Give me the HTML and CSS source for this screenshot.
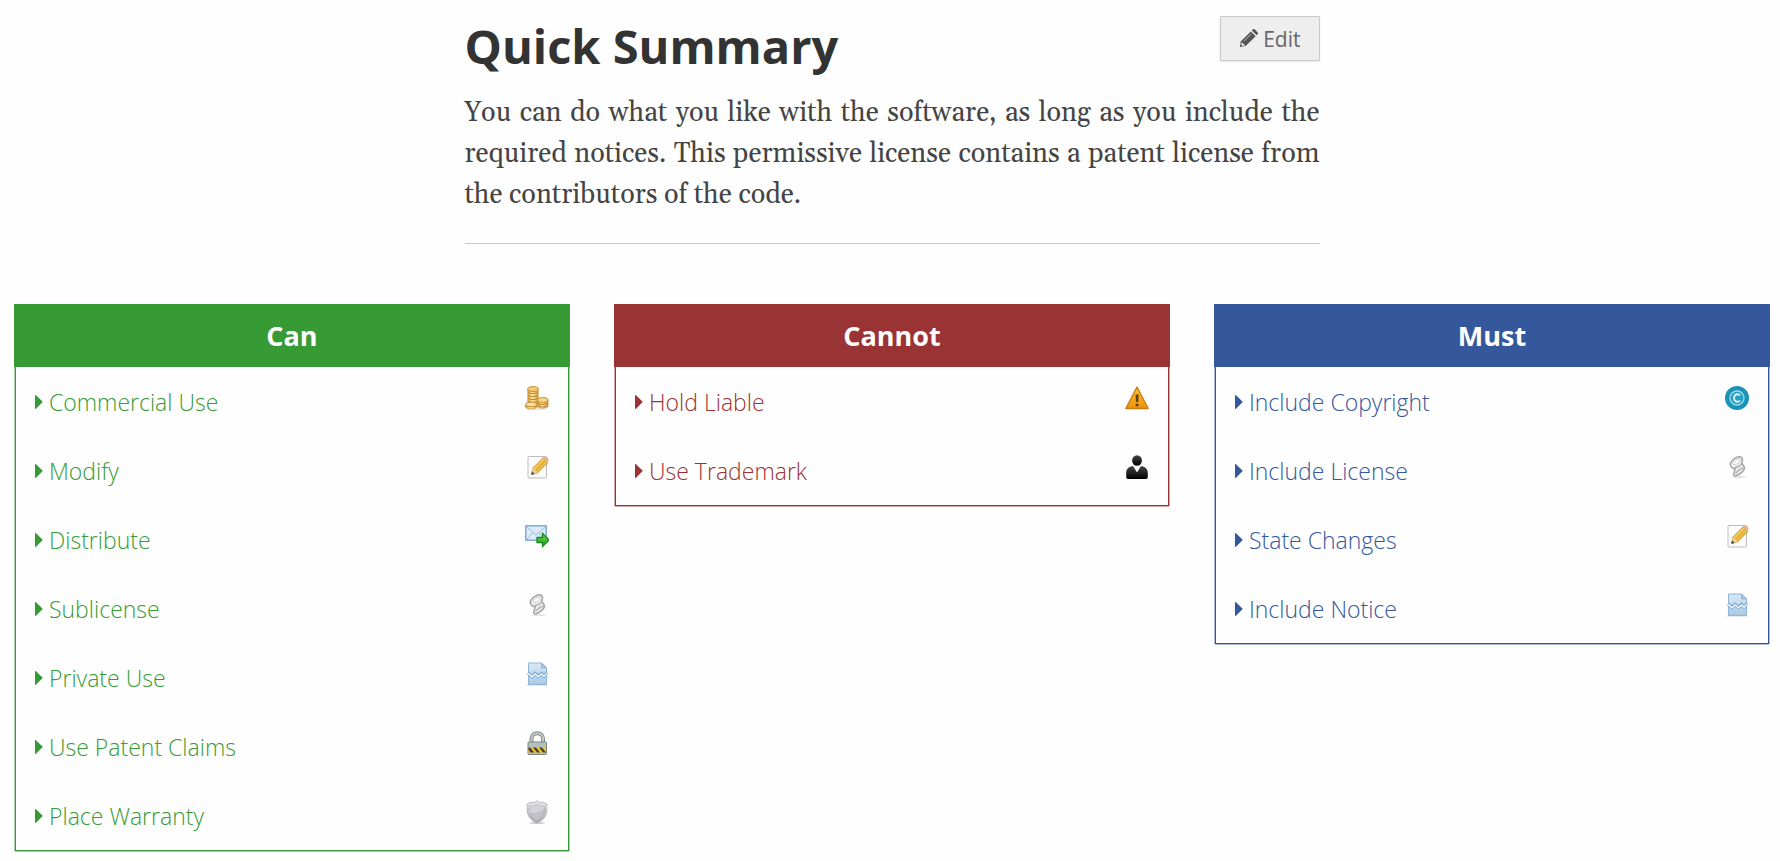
FILE: index.html
```html
<!DOCTYPE html>
<html lang="en">
<head>
<meta charset="utf-8">
<meta name="viewport" content="width=device-width, initial-scale=1">
<title>Quick Summary</title>
<link rel="stylesheet" href="styles.css">
</head>
<body>
<svg class="defs" aria-hidden="true">
  <defs>
    <linearGradient id="gold" x1="0" x2="1" y1="0" y2="0"><stop offset="0" stop-color="#d39a3a"/><stop offset=".45" stop-color="#fae7a4"/><stop offset="1" stop-color="#d09638"/></linearGradient>
    <linearGradient id="pencil" x1="0" x2="1" y1="0" y2="1"><stop offset="0" stop-color="#ffe680"/><stop offset="1" stop-color="#dd9d1c"/></linearGradient>
    <linearGradient id="blue" x1="0" x2="0" y1="0" y2="1"><stop offset="0" stop-color="#d9e9f7"/><stop offset="1" stop-color="#a9c9e4"/></linearGradient>
    <linearGradient id="green" x1="0" x2="0" y1="0" y2="1"><stop offset="0" stop-color="#6fdc4a"/><stop offset="1" stop-color="#1f9d22"/></linearGradient>
    <linearGradient id="amber" x1="0" x2="0" y1="0" y2="1"><stop offset="0" stop-color="#ffc933"/><stop offset="1" stop-color="#ef8f0c"/></linearGradient>
    <linearGradient id="black" x1="0" x2="0" y1="0" y2="1"><stop offset="0" stop-color="#444"/><stop offset="1" stop-color="#000"/></linearGradient>
    <linearGradient id="steel" x1="0" x2="0" y1="0" y2="1"><stop offset="0" stop-color="#ebebed"/><stop offset="1" stop-color="#a9a9b4"/></linearGradient>
    <symbol id="i-caret" viewBox="0 0 8 14"><path d="M0 .6C0 0 .6-.1 1 .3l6.2 6c.5.4.5.9 0 1.3L1 13.7c-.4.4-1 .2-1-.3z" fill="currentColor"/></symbol>
    <symbol id="i-edit" viewBox="0 0 20 20"><path d="M1 19l1-6L12.500 2.500l5 5L7 18z" fill="#555"/><path d="M13.500 1.500l1-1c.7-.7 1.500-.7 2.200 0l2.800 2.800c.7.700.7 1.500 0 2.200l-1 1z" fill="#555"/><path d="M5 13L13 5" stroke="#bbb" stroke-width="1"/><path d="M2.800 14.200l1.200.3.500 1.500 1.400.400.3 1.200-2.200.400-1.500-1.500z" fill="#eee"/></symbol>
    <symbol id="i-coins" viewBox="0 0 24 24">
      <ellipse cx="12" cy="23" rx="11" ry="1" fill="#ddd" opacity=".7"/>
      <path d="M2.500 2.800v16h11v-16z" fill="url(#gold)"/>
      <path d="M2.500 6c2 2 9 2 11 0M2.500 9c2 2 9 2 11 0M2.500 12c2 2 9 2 11 0M2.500 15c2 2 9 2 11 0" fill="none" stroke="#bd842c" stroke-width="1"/>
      <ellipse cx="8" cy="3" rx="5.500" ry="2.400" fill="#f3cd73" stroke="#c98f33"/>
      <path d="M12.500 14v6.500c2 2.200 8 2.200 10.500 0V14z" fill="url(#gold)" stroke="#c98f33" stroke-width=".7"/>
      <path d="M12.500 17c2 2 8 2 10.500 0M12.500 19.500c2 2 8 2 10.500 0" fill="none" stroke="#bd842c"/>
      <ellipse cx="17.800" cy="14" rx="5.200" ry="2.400" fill="#f5d689" stroke="#c98f33"/>
      <path d="M.5 18.500v2.700c2 2.400 9 2.400 11.500 0v-2.700z" fill="url(#gold)" stroke="#c98f33" stroke-width=".7"/>
      <ellipse cx="6.200" cy="18.400" rx="5.700" ry="2.300" fill="#f7dfa0" stroke="#c98f33"/>
    </symbol>
    <symbol id="i-note" viewBox="0 0 24 24">
      <rect x="3" y="1.500" width="18.500" height="21.500" rx="1" fill="#fcfcfc" stroke="#bcbcbc"/>
      <path d="M6.500 19.500l1.500-6.500L18 2.700l5 4.600L12.500 18z" fill="url(#pencil)" stroke="#b98a2a" stroke-width=".8"/>
      <path d="M10.500 15.500L20.500 5.200" stroke="#d9a021" stroke-width="1"/>
      <path d="M17.700 3l1.500-1.300c1.800-.8 5.200 2 4.200 4.300L22.500 7.500z" fill="#dfb294"/>
      <path d="M6.500 19.500l1.500-6.500 4.500 5z" fill="#efd3a4"/><path d="M6.300 19.800l.8-3.500 2.500 2.600z" fill="#444"/>
    </symbol>
    <symbol id="i-mail" viewBox="0 0 24 24">
      <rect x=".8" y="1.800" width="20.400" height="14.400" fill="#dcebfa" stroke="#6f9fd2" stroke-width="1.300"/>
      <path d="M1.500 2.500l9.500 8.500 9.500-8.500M1.500 15.500l6.700-7M20 15.500l-6.700-7" fill="none" stroke="#9bbcde"/>
      <path d="M12 13.500h5.500V9.300L24 16l-6.500 6.500v-4H12z" fill="url(#green)" stroke="#188a1c" stroke-width="1.300"/>
    </symbol>
    <symbol id="i-scroll" viewBox="0 0 24 24">
      <ellipse cx="14" cy="22" rx="7" ry="1" fill="#e4e4e4"/>
      <path d="M5.300 8.200C6.500 5 12 1.300 15 1.800c3 .7 3 3.700 1.700 6.200l2.800 4.500c.6 2.800-4.500 6.800-8.300 8.300-2.500.6-3.200-1.500-2-3.500l1-3.300c-3-.3-5.500-3-4.900-5.800z" fill="#eee" stroke="#a4a4a4" stroke-width="1.500"/>
      <path d="M7.500 8.500c1-2 5-4.700 7.500-4.700 1 1.500-.5 4-2 4.700-2 1-4.500 1.500-5.500 0z" fill="#fbfbfb" stroke="#c4c4c4" stroke-width=".8"/>
      <path d="M9.500 12.500c2.500 0 5.500-1.500 7.500-4M10.500 18.500c2-2.500 5.500-5 8.500-5.500" fill="none" stroke="#b0b0b0" stroke-width="1.300"/>
    </symbol>
    <symbol id="i-page" viewBox="0 0 24 24">
      <path d="M2 23h20" stroke="#d0d4d8"/>
      <path d="M3.500 1h13l5 5v16.500h-18z" fill="url(#blue)" stroke="#8fb5d6" stroke-width="1"/>
      <path d="M16.500 1v5h5z" fill="#a6c6e1" stroke="#86aed2" stroke-width=".8"/>
      <path d="M3 11l4 3.500 3-3 3.500 3 3-3 2.500 2.500 3-3.500" fill="none" stroke="#7ba7cf" stroke-width="3.200"/>
      <path d="M3 11.300l4 3.500 3-3 3.500 3 3-3 2.500 2.500 3-3.500" fill="none" stroke="#f8fbff" stroke-width="1.300"/>
    </symbol>
    <symbol id="i-lock" viewBox="0 0 24 24">
      <path d="M6.500 12V7.500c0-7 11.500-7 11.500 0V12" fill="none" stroke="#858d88" stroke-width="4"/>
      <path d="M6.500 12V7.500c0-7 11.500-7 11.500 0V12" fill="none" stroke="#c3cac6" stroke-width="2"/>
      <rect x="3" y="11" width="18.500" height="12.500" rx="1" fill="#b4c0bb" stroke="#7b8581"/>
      <path d="M3.500 16.500H21v5H3.500z" fill="#efc22c"/>
      <path d="M3.500 16.500h1.700l4 5H5.500l-2-2.700zM8 16.500h3l4 5h-3zM14 16.500h3l4 5h-3z" fill="#46432c"/>
    </symbol>
    <symbol id="i-shield" viewBox="0 0 24 24">
      <ellipse cx="12" cy="23" rx="8" ry="1" fill="#ccc"/>
      <path d="M12 .8c2 1.800 4 2.400 6 1.200l4.500 2.500c-1.200 1.500-1 2.700-.7 4.700C22.200 16.500 17 21 12 23 7 21 1.800 16.500 2.200 9.200c.3-2 .5-3.200-.7-4.700L6 2c2 1.200 4 .6 6-1.200z" fill="url(#steel)" stroke="#aaa" stroke-width=".8"/>
      <path d="M12 4.500c2.500 1.700 5 2 7.500 1.500C20.500 14 17 18.500 12 20.500 7 18.500 3.500 14 4.500 6c2.500.5 5 .2 7.500-1.500z" fill="#c0c0c9" stroke="#a8a8b0" stroke-width=".7"/>
      <path d="M5 12.500C10 14 17 11.500 19.300 7.500V6.200C17 6.500 14.500 6.200 12 4.800 9.500 6.200 7 6.500 4.700 6.200z" fill="#d3d3d9"/>
    </symbol>
    <symbol id="i-warning" viewBox="0 0 24 24">
      <path d="M12 1.200L23.200 22.500H.8z" fill="url(#amber)" stroke="#cd7d10" stroke-width="1.400" stroke-linejoin="round"/>
      <path d="M10.500 8.500h3.200l-.5 7.500h-2.200zM10.700 17.700h2.800v2.500h-2.800z" fill="#5a4013"/>
    </symbol>
    <symbol id="i-person" viewBox="0 0 24 24">
      <ellipse cx="12" cy="5.500" rx="4.900" ry="5.200" fill="url(#black)"/>
      <path d="M1.200 22v-4c0-4.500 3-6.800 7-6.800l3.800 6.300 3.800-6.300c4 0 7 2.300 7 6.800v4c0 1-.8 2-2 2H3.200c-1.200 0-2-1-2-2z" fill="url(#black)"/>
    </symbol>
    <symbol id="i-copyright" viewBox="0 0 24 24">
      <circle cx="12" cy="12" r="12" fill="#1a93b8"/>
      <circle cx="12" cy="12" r="7" fill="#239fc3" stroke="#a0d8e8" stroke-width="1.400"/>
      <path d="M15 9.500c-2-2.500-6-1-6 2.500s4 5 6 2.500" fill="none" stroke="#d6f0f7" stroke-width="1.900"/>
    </symbol>
  </defs>
</svg>
<main class="page">
  <section class="summary">
    <div class="summary-head">
      <h1 class="title">Quick Summary</h1>
      <button class="edit" type="button"><svg class="edit-icon" aria-hidden="true"><use href="#i-edit"/></svg>Edit</button>
    </div>
    <p class="description">You can do what you like with the software, as long as you include the required notices. This permissive license contains a patent license from the contributors of the code.</p>
  </section>
  <div class="columns">
    <section class="panel can">
      <h2 class="panel-title">Can</h2>
      <ul class="rules">
        <li><a class="rule" href="#commercial-use"><svg class="caret" aria-hidden="true"><use href="#i-caret"/></svg><span class="label">Commercial Use</span><svg class="icon" aria-hidden="true"><use href="#i-coins"/></svg></a></li>
        <li><a class="rule" href="#modify"><svg class="caret" aria-hidden="true"><use href="#i-caret"/></svg><span class="label">Modify</span><svg class="icon" aria-hidden="true"><use href="#i-note"/></svg></a></li>
        <li><a class="rule" href="#distribute"><svg class="caret" aria-hidden="true"><use href="#i-caret"/></svg><span class="label">Distribute</span><svg class="icon" aria-hidden="true"><use href="#i-mail"/></svg></a></li>
        <li><a class="rule" href="#sublicense"><svg class="caret" aria-hidden="true"><use href="#i-caret"/></svg><span class="label">Sublicense</span><svg class="icon" aria-hidden="true"><use href="#i-scroll"/></svg></a></li>
        <li><a class="rule" href="#private-use"><svg class="caret" aria-hidden="true"><use href="#i-caret"/></svg><span class="label">Private Use</span><svg class="icon" aria-hidden="true"><use href="#i-page"/></svg></a></li>
        <li><a class="rule" href="#use-patent-claims"><svg class="caret" aria-hidden="true"><use href="#i-caret"/></svg><span class="label">Use Patent Claims</span><svg class="icon" aria-hidden="true"><use href="#i-lock"/></svg></a></li>
        <li><a class="rule" href="#place-warranty"><svg class="caret" aria-hidden="true"><use href="#i-caret"/></svg><span class="label">Place Warranty</span><svg class="icon" aria-hidden="true"><use href="#i-shield"/></svg></a></li>
      </ul>
    </section>
    <section class="panel cannot">
      <h2 class="panel-title">Cannot</h2>
      <ul class="rules">
        <li><a class="rule" href="#hold-liable"><svg class="caret" aria-hidden="true"><use href="#i-caret"/></svg><span class="label">Hold Liable</span><svg class="icon" aria-hidden="true"><use href="#i-warning"/></svg></a></li>
        <li><a class="rule" href="#use-trademark"><svg class="caret" aria-hidden="true"><use href="#i-caret"/></svg><span class="label">Use Trademark</span><svg class="icon" aria-hidden="true"><use href="#i-person"/></svg></a></li>
      </ul>
    </section>
    <section class="panel must">
      <h2 class="panel-title">Must</h2>
      <ul class="rules">
        <li><a class="rule" href="#include-copyright"><svg class="caret" aria-hidden="true"><use href="#i-caret"/></svg><span class="label">Include Copyright</span><svg class="icon" aria-hidden="true"><use href="#i-copyright"/></svg></a></li>
        <li><a class="rule" href="#include-license"><svg class="caret" aria-hidden="true"><use href="#i-caret"/></svg><span class="label">Include License</span><svg class="icon" aria-hidden="true"><use href="#i-scroll"/></svg></a></li>
        <li><a class="rule" href="#state-changes"><svg class="caret" aria-hidden="true"><use href="#i-caret"/></svg><span class="label">State Changes</span><svg class="icon" aria-hidden="true"><use href="#i-note"/></svg></a></li>
        <li><a class="rule" href="#include-notice"><svg class="caret" aria-hidden="true"><use href="#i-caret"/></svg><span class="label">Include Notice</span><svg class="icon" aria-hidden="true"><use href="#i-page"/></svg></a></li>
      </ul>
    </section>
  </div>
</main>
</body>
</html>
```
FILE: styles.css
```css
* { box-sizing: border-box; }
body {
  margin: 0;
  background: #fefefe;
  color: #333;
  font-family: "Open Sans", "Noto Sans", sans-serif;
}
.defs { position: absolute; width: 0; height: 0; }
.page { padding: 16px 10px 4px 14px; }
.summary {
  max-width: 855px;
  margin: 0 auto;
  border-bottom: 1px solid #c8c8c8;
  padding-bottom: 27px;
}
.summary-head {
  display: flex;
  justify-content: space-between;
  align-items: flex-start;
}
.title {
  margin: 0;
  font-size: 47px;
  line-height: 61px;
  font-weight: 700;
}
.edit {
  display: flex;
  align-items: center;
  gap: 5px;
  height: 45px;
  padding: 0 18px;
  border: 1px solid #c8c8c8;
  border-radius: 1px;
  background: #eee;
  color: #666;
  font-family: inherit;
  font-size: 21px;
  line-height: 28px;
  box-shadow: 0 1px 2px rgba(0, 0, 0, .1);
}
.edit-icon { width: 19px; height: 19px; }
.description {
  margin: 16px 0 0;
  color: #444;
  font-family: Georgia, Gelasio, "Liberation Serif", serif;
  font-size: 27px;
  line-height: 41px;
  text-align: justify;
}
.columns {
  display: grid;
  grid-template-columns: repeat(3, 1fr);
  gap: 44px;
  align-items: start;
  margin-top: 60px;
}
.can { --main: #379b35; --soft: #a5d2a4; }
.cannot { --main: #9a3334; --soft: #d5a9aa; }
.must { --main: #35589c; --soft: #aab9d7; }
.panel-title {
  margin: 0;
  background: var(--main);
  color: #fff;
  font-size: 27px;
  line-height: 63px;
  font-weight: 700;
  text-align: center;
}
.rules {
  margin: 0 1px;
  padding: 0;
  list-style: none;
  border: 1px solid var(--main);
  border-top: 0;
  box-shadow: 0 1px 0 var(--soft), 1px 0 0 var(--soft), -1px 0 0 var(--soft);
}
.rule {
  display: flex;
  align-items: center;
  height: 69px;
  padding: 0 19px;
  color: var(--main);
  font-size: 23px;
  font-weight: 350;
  text-decoration: none;
}
.caret { width: 8px; height: 14px; margin-right: 6px; }
.label { flex: 1; }
.icon { width: 24px; height: 24px; margin-bottom: 7px; }
```
